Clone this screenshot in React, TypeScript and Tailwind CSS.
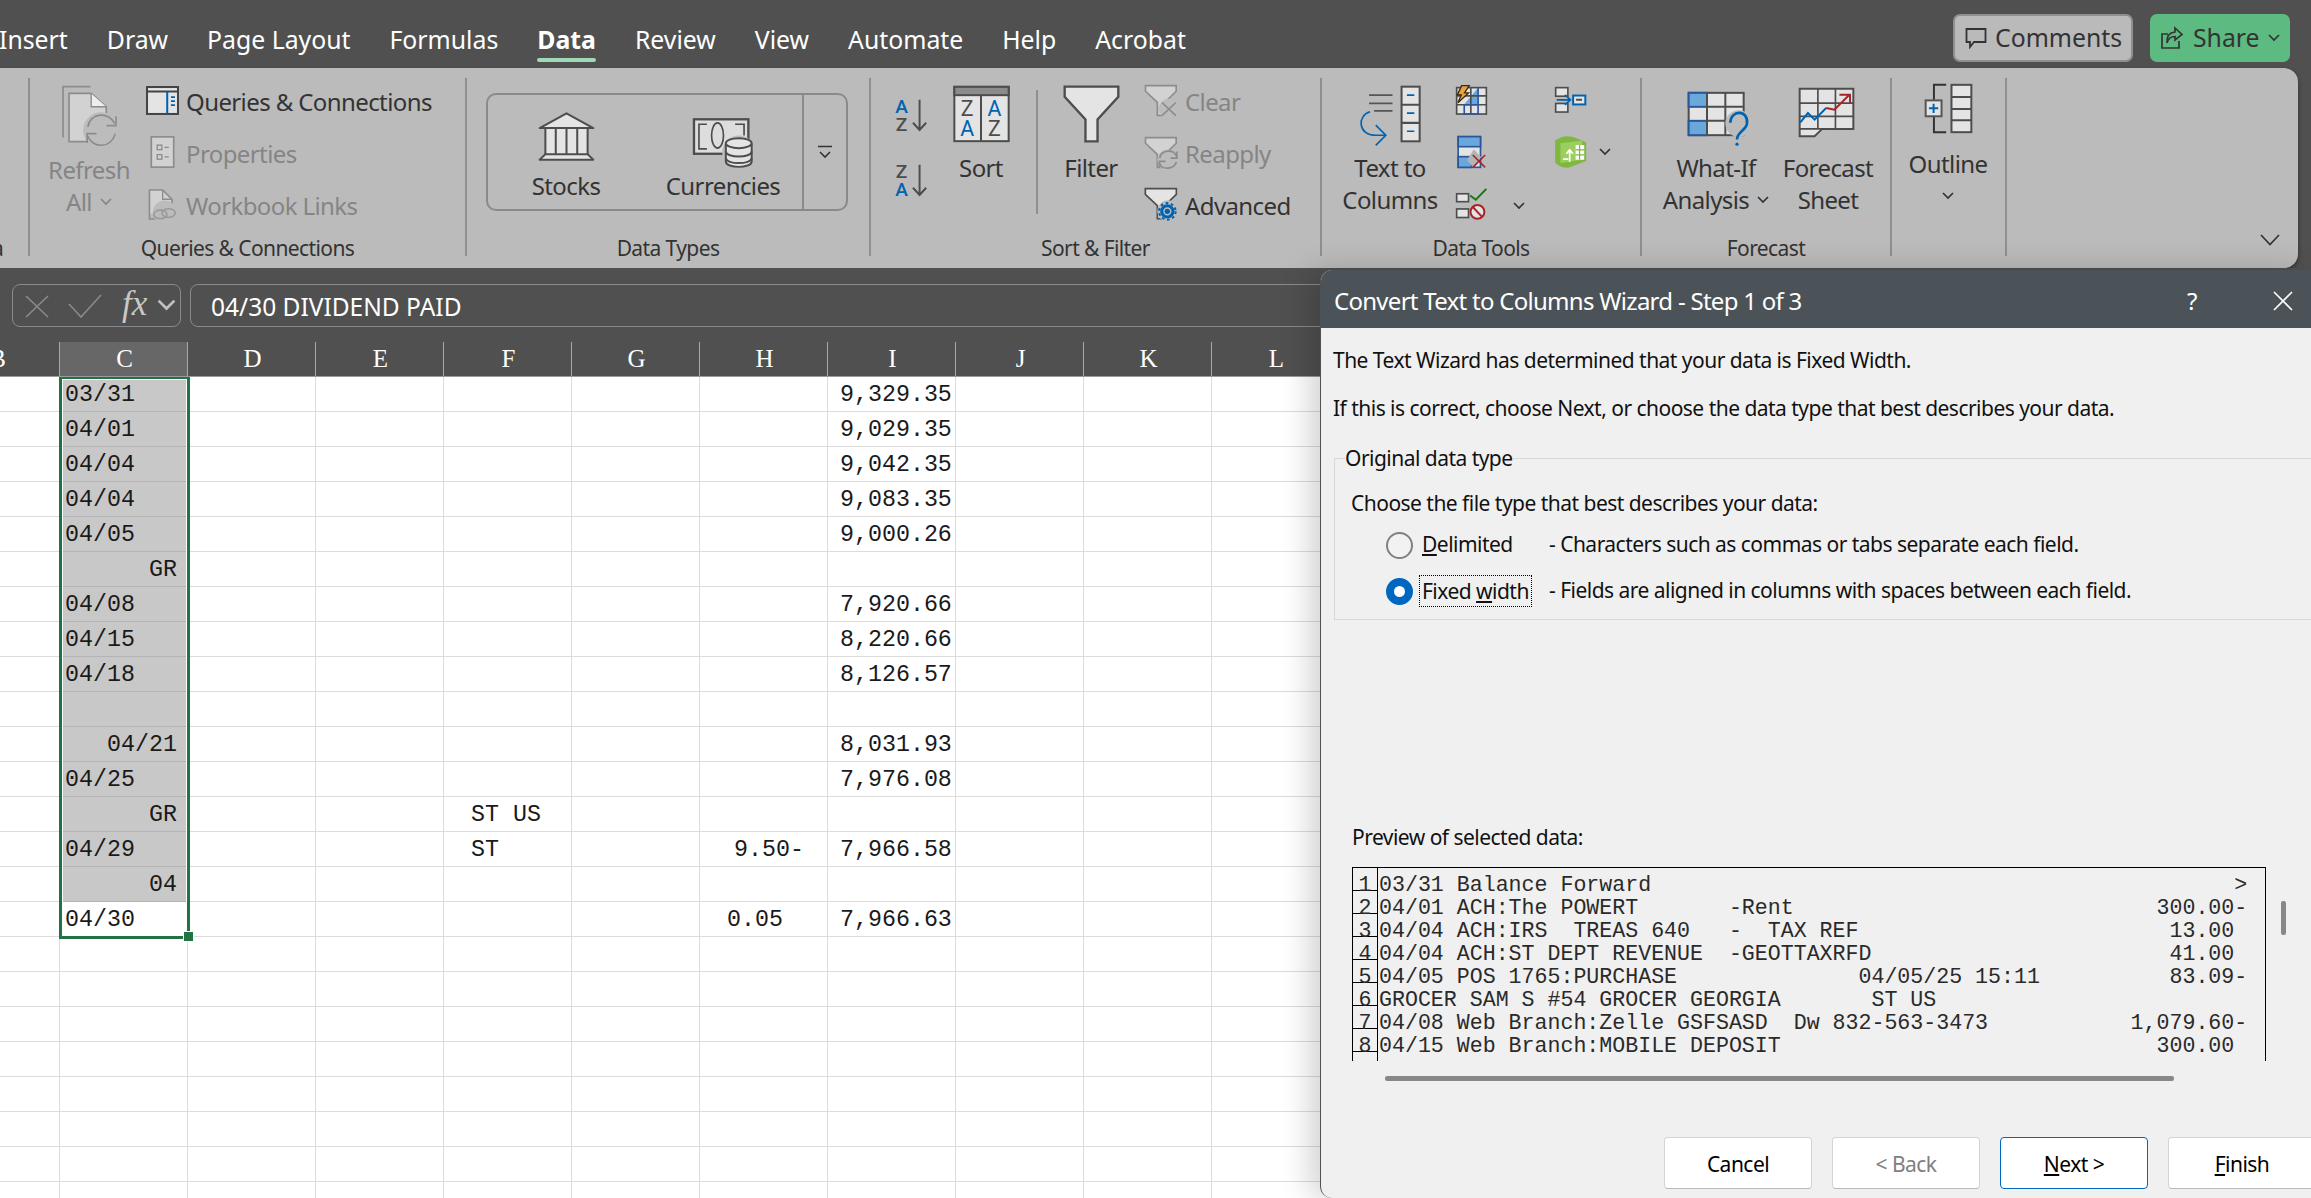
import React from "react";

const D = "#4d4d4d";
const G = "#8c8c8c";
const F = "#e4e4e4";
const FD = "#d2d2d2";
const B = "#0063b1";
const LB = "#6aa8dc";
const NB = "#2b579a";
const R = "#a4262c";
const H = "#bcbcbc";

function Ic({ vb, w, h, children, className }: { vb: string; w: number; h: number; children?: React.ReactNode; className?: string }) {
  return (
    <svg viewBox={vb} width={w} height={h} fill="none" className={"block shrink-0 overflow-visible " + (className ?? "")}>
      {children}
    </svg>
  );
}

function Chev({ c = "#333", w = 12 }: { c?: string; w?: number }) {
  return (
    <svg viewBox="0 0 12 8" width={w} height={(w * 8) / 12} fill="none" className="block shrink-0">
      <path d="M1 1l5 5 5-5" stroke={c} strokeWidth="1.7" />
    </svg>
  );
}

const Refresh = () => (
  <Ic vb="20 15 170 185" w={57} h={62}>
    <path d="M108 20H26V172" stroke={G} strokeWidth="5" />
    <path d="M44 40H110L155 80V184H44Z" fill={FD} stroke={G} strokeWidth="5" />
    <path d="M110 40V80H155" fill="#eeeeee" stroke={G} strokeWidth="4" />
    <circle cx="140" cy="150" r="54" fill={H} />
    <path d="M100 140C108 95 165 95 180 130M182 160C170 205 115 205 100 168" stroke={G} strokeWidth="5" />
    <path d="M184 108V136H156M98 188V160H126" stroke={G} strokeWidth="5" />
  </Ic>
);
const Queries = () => (
  <Ic vb="257 17 98 86" w={33} h={29}>
    <rect x="260" y="20" width="92" height="80" fill={F} stroke="#444" strokeWidth="6" />
    <path d="M260 33H352" stroke="#444" strokeWidth="6" />
    <path d="M320 35V98" stroke={B} strokeWidth="6" />
    <path d="M331 50H343M331 62H343M331 74H343" stroke={B} strokeWidth="5" />
  </Ic>
);
const Properties = () => (
  <Ic vb="268 165 76 102" w={25} h={34}>
    <rect x="272" y="170" width="68" height="92" fill={FD} stroke={G} strokeWidth="5" />
    <rect x="290" y="195" width="14" height="14" stroke={G} strokeWidth="4" />
    <rect x="290" y="224" width="14" height="14" stroke={G} strokeWidth="4" />
    <path d="M312 202H325M312 231H325" stroke={G} strokeWidth="4" />
  </Ic>
);
const WorkbookLinks = () => (
  <Ic vb="268 322 90 100" w={30} h={33}>
    <path d="M272 328H312L340 356V400H272Z" fill={FD} />
    <path d="M292 416H272V328H312L340 356V380" stroke={G} strokeWidth="5" />
    <path d="M312 328V356H340" stroke={G} strokeWidth="4" />
    <circle cx="318" cy="396" r="36" fill={H} />
    <ellipse cx="305" cy="402" rx="20" ry="13" stroke="#9a9a9a" strokeWidth="5" />
    <ellipse cx="330" cy="398" rx="20" ry="13" stroke="#9a9a9a" strokeWidth="5" />
  </Ic>
);
const Stocks = () => (
  <Ic vb="20 20 170 146" w={57} h={49}>
    <rect x="42" y="70" width="126" height="78" fill={F} />
    <path d="M105 24L185 68H25Z" fill={F} stroke={D} strokeWidth="6" strokeLinejoin="round" />
    <path d="M42 70V146M73 70V146M105 70V146M137 70V146M168 70V146" stroke={D} strokeWidth="6" />
    <path d="M42 146H168L185 162H25Z" fill={F} stroke={D} strokeWidth="6" strokeLinejoin="round" />
  </Ic>
);
const Currencies = () => (
  <Ic vb="485 35 190 155" w={63} h={52}>
    <rect x="491" y="41" width="164" height="104" fill="#dddddd" stroke={D} strokeWidth="7" />
    <path d="M530 56H506V130H530M615 56H642V90" stroke={D} strokeWidth="5" />
    <ellipse cx="562" cy="90" rx="18" ry="38" stroke={D} strokeWidth="5" />
    <circle cx="626" cy="140" r="50" fill={H} />
    <path d="M587 115V168C587 190 665 190 665 168V115" fill={F} stroke={D} strokeWidth="6" />
    <ellipse cx="626" cy="113" rx="39" ry="15" fill={F} stroke={D} strokeWidth="6" />
    <path d="M587 138C587 158 665 158 665 138M587 158C587 178 665 178 665 158" stroke={D} strokeWidth="6" />
  </Ic>
);
const AZ = ({ flip }: { flip?: boolean }) => (
  <Ic vb="25 55 105 100" w={35} h={33}>
    <text x="50" y="101" textAnchor="middle" fontSize="58" fontWeight="500" fill={flip ? D : B} className="font-['Roboto']">{flip ? "Z" : "A"}</text>
    <text x="50" y="155" textAnchor="middle" fontSize="58" fontWeight="500" fill={flip ? B : D} className="font-['Roboto']">{flip ? "A" : "Z"}</text>
    <path d="M105 60V150M85 130L105 152L125 130" stroke={D} strokeWidth="6" />
  </Ic>
);
const SortI = () => (
  <Ic vb="200 15 177 173" w={59} h={58}>
    <rect x="207" y="20" width="163" height="163" fill={F} stroke={D} strokeWidth="6" />
    <rect x="207" y="20" width="163" height="25" fill={G} stroke={D} strokeWidth="6" />
    <path d="M287 45V183" stroke={D} strokeWidth="6" />
    <text x="245" y="107" textAnchor="middle" fontSize="64" fill={D} className="font-['Roboto']">Z</text>
    <text x="245" y="168" textAnchor="middle" fontSize="64" fill={B} className="font-['Roboto']">A</text>
    <text x="327" y="107" textAnchor="middle" fontSize="64" fill={B} className="font-['Roboto']">A</text>
    <text x="327" y="168" textAnchor="middle" fontSize="64" fill={D} className="font-['Roboto']">Z</text>
  </Ic>
);
const FilterI = () => (
  <Ic vb="530 15 170 173" w={57} h={58}>
    <path d="M535 20H695V50L633 118V183H597V118L535 50Z" fill={F} stroke={D} strokeWidth="7" />
  </Ic>
);
const Funnel = ({ c, f, y = 0 }: { c: string; f: string; y?: number }) => (
  <path transform={`translate(0 ${y})`} d="M782 15H875V32L840 66V105H818V66L782 32Z" fill={f} stroke={c} strokeWidth="5" />
);
const ClearI = () => (
  <Ic vb="778 10 102 100" w={34} h={33}>
    <Funnel c={G} f={FD} />
    <circle cx="852" cy="85" r="30" fill={H} />
    <path d="M832 66L874 106M874 66L832 106" stroke={G} strokeWidth="5" />
  </Ic>
);
const ReapplyI = () => (
  <Ic vb="778 165 102 100" w={34} h={33}>
    <Funnel c={G} f={FD} y={155} />
    <circle cx="850" cy="238" r="32" fill={H} />
    <path d="M825 232C830 205 868 205 876 226M876 244C868 268 830 268 825 248" stroke={G} strokeWidth="5" />
    <path d="M877 212V232H858M824 262V242H843" stroke={G} strokeWidth="5" />
  </Ic>
);
const AdvancedI = () => (
  <Ic vb="778 320 102 102" w={34} h={34}>
    <Funnel c={D} f={F} y={310} />
    <circle cx="850" cy="392" r="32" fill={H} />
    <circle cx="848" cy="393" r="17" stroke={B} strokeWidth="9" />
    <circle cx="848" cy="393" r="25" stroke={B} strokeWidth="6" strokeDasharray="8 8" />
    <circle cx="848" cy="393" r="8" fill={B} />
  </Ic>
);
const TextToCols = () => (
  <Ic vb="35 15 185 185" w={62} h={62}>
    <path d="M65 45H135M65 70H135M80 92H135" stroke="#555" strokeWidth="5" />
    <rect x="162" y="20" width="54" height="163" fill={F} stroke={D} strokeWidth="6" />
    <path d="M162 74H216M162 128H216" stroke={D} strokeWidth="6" />
    <path d="M178 45H200M178 99H200M178 153H200" stroke={B} strokeWidth="5" />
    <path d="M68 95C30 105 30 165 85 165H112M85 135L115 165L85 195" stroke={B} strokeWidth="5" />
  </Ic>
);
const FlashFill = () => (
  <Ic vb="325 10 100 95" w={33} h={32}>
    <rect x="330" y="20" width="90" height="80" fill={F} stroke={D} strokeWidth="5" />
    <path d="M353 70L395 20V70Z" fill={LB} />
    <path d="M330 45H420M330 72H420M373 20V100" stroke={D} strokeWidth="5" />
    <path d="M353 72H395V20M353 72V100H395V72" stroke={NB} strokeWidth="5" />
    <path d="M345 14H368L354 36H366L334 66L344 42H332Z" fill="#e8a33d" stroke="#3a2a10" strokeWidth="4" />
  </Ic>
);
const RemoveDup = () => (
  <Ic vb="335 165 92 102" w={31} h={34}>
    <rect x="341" y="170" width="67" height="92" fill={F} stroke={NB} strokeWidth="5" />
    <rect x="341" y="170" width="67" height="30" fill={LB} stroke={NB} strokeWidth="5" />
    <rect x="341" y="230" width="40" height="32" fill={LB} stroke={NB} strokeWidth="5" />
    <path d="M388 208L410 232L385 262L368 240Z" fill="#b4b4b4" />
    <path d="M385 225L422 262M422 225L385 262" stroke={R} strokeWidth="5" />
  </Ic>
);
const Validation = () => (
  <Ic vb="325 320 100 102" w={33} h={34}>
    <rect x="330" y="340" width="36" height="24" fill={F} stroke={D} strokeWidth="5" />
    <rect x="330" y="386" width="36" height="26" fill={F} stroke={D} strokeWidth="5" />
    <path d="M371 345L388 358L420 325" stroke="#107c10" strokeWidth="6" />
    <circle cx="393" cy="395" r="21" fill={F} stroke={R} strokeWidth="6" />
    <path d="M379 380L407 410" stroke={R} strokeWidth="6" />
  </Ic>
);
const Consolidate = () => (
  <Ic vb="625 15 100 85" w={33} h={28}>
    <rect x="630" y="20" width="37" height="26" fill={F} stroke={D} strokeWidth="5" />
    <rect x="630" y="68" width="37" height="26" fill={F} stroke={D} strokeWidth="5" />
    <path d="M633 57H674M658 42L675 57L658 72" stroke={B} strokeWidth="5" />
    <rect x="683" y="44" width="37" height="27" fill={F} stroke={B} strokeWidth="6" />
    <path d="M692 57H710" stroke={D} strokeWidth="6" />
  </Ic>
);
const GreenCube = () => (
  <Ic vb="622 165 105 103" w={35} h={34}>
    <path d="M628 182Q660 158 700 178L722 188V244L668 264Q640 264 628 248Z" fill="#7fb83f" />
    <path d="M644 190L710 182V240L644 250Z" fill="#9ccd5f" />
    <path d="M690 195H716V240H690Z" fill="#ffffff" />
    <path d="M690 210H716M690 225H716M702 195V240" stroke="#7fb83f" strokeWidth="4" />
    <path d="M672 212V246M662 222L672 210L682 222M652 238H668" stroke="#ffffff" strokeWidth="5" />
  </Ic>
);
const WhatIf = () => (
  <Ic vb="20 30 195 170" w={65} h={57}>
    <rect x="25" y="38" width="165" height="127" fill={F} stroke={D} strokeWidth="6" />
    <rect x="25" y="38" width="55" height="42" fill={LB} stroke={NB} strokeWidth="6" />
    <rect x="25" y="122" width="55" height="43" fill={LB} stroke={NB} strokeWidth="6" />
    <path d="M80 80H190M80 122H190M135 38V165M80 38V165" stroke={D} strokeWidth="6" />
    <circle cx="175" cy="130" r="40" fill={H} />
    <path d="M150 128C150 88 205 88 200 130C198 150 170 155 170 178" stroke={B} strokeWidth="8" />
    <circle cx="170" cy="192" r="5" fill={B} />
  </Ic>
);
const ForecastI = () => (
  <Ic vb="355 22 172 153" w={57} h={51}>
    <path d="M360 27H522V148H428L405 170H360Z" fill={F} stroke={D} strokeWidth="6" />
    <path d="M360 148H428" stroke={D} strokeWidth="5" />
    <path d="M415 27V148M468 27V148M360 70H522M360 110H522" stroke={D} strokeWidth="5" />
    <path d="M362 128L385 100L405 120L440 85" stroke={B} strokeWidth="6" />
    <path d="M440 85L465 90L510 45M480 45H512V72" stroke={R} strokeWidth="6" />
  </Ic>
);
const OutlineI = () => (
  <Ic vb="730 10 148 153" w={49} h={51}>
    <path d="M797 15H760V60M760 112V158H797" stroke="#333" strokeWidth="6" />
    <rect x="735" y="62" width="48" height="48" fill={F} stroke="#555" strokeWidth="6" />
    <path d="M745 86H773M759 72V100" stroke={B} strokeWidth="6" />
    <rect x="813" y="15" width="60" height="143" fill={F} stroke={D} strokeWidth="6" />
    <path d="M813 52H873M813 88H873M813 122H873" stroke={D} strokeWidth="6" />
  </Ic>
);

function Big({ w, icon, lines, area = "pt-[8px] h-[74px]", className = "", dim }: { w: string; icon: React.ReactNode; lines: React.ReactNode[]; area?: string; className?: string; dim?: boolean }) {
  return (
    <div className={"flex flex-col items-center shrink-0 " + w + " " + className}>
      <div className={"flex justify-center " + area}>{icon}</div>
      {lines.map((l, i) => (
        <div key={i} className={"h-[32px] leading-[32px] flex items-center gap-[8px] whitespace-nowrap " + (dim ? "text-[#858585]" : "text-[#333333]")}>
          {l}
        </div>
      ))}
    </div>
  );
}

function Mini({ icon, label, dim, box = "w-[33px]" }: { icon: React.ReactNode; label?: string; dim?: boolean; box?: string }) {
  return (
    <div className="flex items-center h-[52px]">
      <div className={"flex justify-center shrink-0 -mt-[4px] " + box}>{icon}</div>
      {label && <span className={"ml-[7px] whitespace-nowrap " + (dim ? "text-[#858585]" : "text-[#333333]")}>{label}</span>}
    </div>
  );
}

function Group({ w, label, children, labelCls = "text-center" }: { w: string; label?: string; children?: React.ReactNode; labelCls?: string }) {
  return (
    <div className={"flex flex-col h-[178px] shrink-0 border-r-2 border-[#8f8f8f] " + w}>
      <div className="flex flex-1 min-h-0">{children}</div>
      <div className={"h-[24px] -mb-[4px] leading-[24px] text-[#333333] whitespace-nowrap text-[21px] " + labelCls}>{label}</div>
    </div>
  );
}

const tabs = ["Insert", "Draw", "Page Layout", "Formulas", "Data", "Review", "View", "Automate", "Help", "Acrobat"];

function TopBar() {
  return (
    <div className="flex items-end h-[68px] pb-[6px] bg-[#505050] shrink-0 text-white tracking-normal">
      <div className="flex items-center gap-[39px] -ml-[1px] text-[24.8px]">
        {tabs.map((t) => (
          <div key={t} className={"relative h-[44px] leading-[42px] whitespace-nowrap " + (t === "Data" ? "font-bold" : "")}>
            {t}
            {t === "Data" && <div className="absolute left-0 right-0 bottom-0 h-[4px] rounded-[2px] bg-[#a0d8b8]" />}
          </div>
        ))}
      </div>
      <div className="ml-auto flex items-center gap-[17px] pr-[21px]">
        <div className="flex items-center w-[180px] h-[48px] pl-[10px] bg-[#bababa] border-2 border-[#8f8f8f] rounded-[7px] text-[#333333] text-[24.8px]">
          <svg viewBox="0 0 22 22" width="22" height="22" fill="none" className="shrink-0">
            <path d="M1.5 2H20.5V15H9L5 20V15H1.5Z" stroke="#333" strokeWidth="1.8" />
          </svg>
          <span className="ml-[8px]">Comments</span>
        </div>
        <div className="flex items-center w-[140px] h-[48px] pl-[10px] bg-[#5dbb82] rounded-[7px] text-[#333333] text-[24.8px]">
          <svg viewBox="0 0 24 24" width="24" height="24" fill="none" className="shrink-0">
            <path d="M8 8H2V22H19V15" stroke="#333" strokeWidth="1.7" />
            <path d="M15 2L22 8.5L15 14V10.5C10 10.5 8 13 7 17C6.5 10 9 6.5 15 6Z" stroke="#333" strokeWidth="1.7" />
          </svg>
          <span className="ml-[9px]">Share</span>
          <span className="ml-[8px]"><Chev /></span>
        </div>
      </div>
    </div>
  );
}

function Ribbon() {
  return (
    <div className="flex w-[2298px] h-[200px] shrink-0 pt-[10px] bg-[#bbbbbb] rounded-r-[14px] text-[24px] tracking-[-0.025em] shadow-[0_2px_4px_rgba(0,0,0,0.4)] overflow-hidden">
      <Group w="w-[30px]" label="a" labelCls="-ml-[8px]" />
      <Group w="w-[437px]" label="Queries & Connections">
        <Big w="w-[100px]" className="ml-[9px]" dim area="pt-[7px] h-[76px]" icon={<Refresh />} lines={["Refresh", <>All <Chev c="#858585" /></>]} />
        <div className="flex flex-col ml-[7px] -mt-[2px]">
          <Mini icon={<Queries />} label="Queries & Connections" />
          <Mini icon={<Properties />} label="Properties" dim />
          <Mini icon={<WorkbookLinks />} label="Workbook Links" dim />
        </div>
      </Group>
      <Group w="w-[404px]" label="Data Types">
        <div className="flex ml-[19px] mt-[15px] w-[362px] h-[118px] border-2 border-[#8a8a8a] rounded-[10px]">
          <div className="flex flex-col items-center w-[156px] pt-[17px]">
            <div className="h-[58px]"><Stocks /></div>
            <div className="h-[32px] leading-[32px] text-[#333333]">Stocks</div>
          </div>
          <div className="flex flex-col items-center w-[158px] pt-[22px]">
            <div className="h-[53px]"><Currencies /></div>
            <div className="h-[32px] leading-[32px] text-[#333333]">Currencies</div>
          </div>
          <div className="flex-1 flex items-center justify-center border-l-2 border-[#8a8a8a]">
            <svg viewBox="0 0 16 14" width="16" height="14" fill="none">
              <path d="M1 1.5H15" stroke="#333" strokeWidth="1.6" />
              <path d="M3 7L8 12L13 7" stroke="#333" strokeWidth="1.6" />
            </svg>
          </div>
        </div>
      </Group>
      <Group w="w-[451px]" label="Sort & Filter">
        <div className="flex flex-col ml-[22px] pt-[20px] gap-[32px] shrink-0">
          <AZ />
          <AZ flip />
        </div>
        <Big w="w-[70px]" className="ml-[18px]" area="pt-[7px] h-[74px]" icon={<SortI />} lines={["Sort"]} />
        <div className="w-[2px] h-[124px] mt-[12px] ml-[20px] bg-[#8f8f8f] shrink-0" />
        <Big w="w-[70px]" className="ml-[18px]" area="pt-[7px] h-[74px]" icon={<FilterI />} lines={["Filter"]} />
        <div className="flex flex-col ml-[18px] -mt-[2px]">
          <Mini icon={<ClearI />} label="Clear" dim box="w-[34px]" />
          <Mini icon={<ReapplyI />} label="Reapply" dim box="w-[34px]" />
          <Mini icon={<AdvancedI />} label="Advanced" box="w-[34px]" />
        </div>
      </Group>
      <Group w="w-[320px]" label="Data Tools">
        <Big w="w-[100px]" className="ml-[18px]" area="pt-[7px] h-[74px]" icon={<TextToCols />} lines={["Text to", "Columns"]} />
        <div className="flex flex-col w-[100px] ml-[13px] -mt-[2px] shrink-0">
          <Mini icon={<FlashFill />} box="w-[37px]" />
          <Mini icon={<RemoveDup />} box="w-[37px]" />
          <div className="flex items-center h-[52px]">
            <div className="flex justify-center w-[37px] -mt-[4px]"><Validation /></div>
            <div className="ml-[23px]"><Chev /></div>
          </div>
        </div>
        <div className="flex flex-col -mt-[2px]">
          <Mini icon={<Consolidate />} box="w-[35px]" />
          <div className="flex items-center h-[52px]">
            <div className="flex justify-center w-[35px] -mt-[4px]"><GreenCube /></div>
            <div className="ml-[11px] -mt-[4px]"><Chev /></div>
          </div>
        </div>
      </Group>
      <Group w="w-[250px]" label="Forecast">
        <Big w="w-[120px]" className="ml-[14px]" area="pt-[12px] pl-[6px] h-[74px]" icon={<WhatIf />} lines={["What-If", <>Analysis <Chev /></>]} />
        <Big w="w-[100px]" className="ml-[2px]" area="pt-[9px] pr-[3px] h-[74px]" icon={<ForecastI />} lines={["Forecast", "Sheet"]} />
      </Group>
      <Group w="w-[115px]">
        <Big w="w-[90px]" className="ml-[11px]" area="pt-[5px] h-[70px]" icon={<OutlineI />} lines={["Outline", <Chev />]} />
      </Group>
      <div className="ml-auto self-end mb-[22px] mr-[18px]">
        <svg viewBox="0 0 20 12" width="20" height="12" fill="none" className="block">
          <path d="M1 1L10 10.5L19 1" stroke="#333" strokeWidth="1.7" />
        </svg>
      </div>
    </div>
  );
}

function FormulaBar() {
  return (
    <div className="flex h-[74px] shrink-0 pt-[16px] pb-[15px] pl-[12px] gap-[9px] bg-[#505050]">
      <div className="flex items-center w-[169px] h-full border border-[#8a8a8a] rounded-[8px] shrink-0">
        <svg viewBox="0 0 100 24" width="100" height="24" fill="none" className="ml-[12px] shrink-0">
          <path d="M1 2L23 23M23 2L1 23" stroke="#8a8a8a" strokeWidth="1.6" />
          <path d="M76 1L56 23L44 10" stroke="#8a8a8a" strokeWidth="1.6" />
        </svg>
        <span className="-ml-[3px] font-['Liberation_Serif',serif] italic text-[35px] text-[#c8c8c8] leading-none -mt-[4px]">fx</span>
        <span className="ml-[10px]"><Chev c="#c0c0c0" w={19} /></span>
      </div>
      <div className="flex-1 flex items-center h-full pl-[20px] pt-[3px] border border-[#8a8a8a] rounded-[8px] text-white text-[24.5px] tracking-normal">
        04/30 DIVIDEND PAID
      </div>
    </div>
  );
}

const cols = ["C", "D", "E", "F", "G", "H", "I", "J", "K", "L"];

function HeaderRow() {
  return (
    <div className="flex h-[35px] shrink-0 bg-[#505050] border-b border-[#9a9a9a] font-['Liberation_Serif',serif] text-[25px] text-white tracking-normal overflow-hidden">
      <div className="w-[60px] shrink-0 flex justify-end border-r border-[#a8a8a8] overflow-hidden">
        <span className="mr-[53px] leading-[34px]">B</span>
      </div>
      {cols.map((c) => (
        <div key={c} className={"w-[128px] shrink-0 pl-[2px] text-center leading-[34px] border-r border-[#a8a8a8] " + (c === "C" ? "bg-[#676767]" : "")}>
          {c}
        </div>
      ))}
    </div>
  );
}

type Row = { c?: string; cr?: boolean; f?: string; h?: string; hp?: string; i?: string };
const rows: Row[] = [
  { c: "03/31", i: "9,329.35" },
  { c: "04/01", i: "9,029.35" },
  { c: "04/04", i: "9,042.35" },
  { c: "04/04", i: "9,083.35" },
  { c: "04/05", i: "9,000.26" },
  { c: "GR", cr: true },
  { c: "04/08", i: "7,920.66" },
  { c: "04/15", i: "8,220.66" },
  { c: "04/18", i: "8,126.57" },
  {},
  { c: "04/21", cr: true, i: "8,031.93" },
  { c: "04/25", i: "7,976.08" },
  { c: "GR", cr: true, f: "ST US" },
  { c: "04/29", f: "ST", h: "9.50-", hp: "pl-[34px]", i: "7,966.58" },
  { c: "04", cr: true },
  { c: "04/30", h: "0.05", hp: "pl-[27px]", i: "7,966.63" },
  {}, {}, {}, {}, {}, {}, {}, {},
];

const cell = "w-[128px] shrink-0 flex items-center pt-[2px] border-r border-b border-[#dcdcdc] ";

function Grid() {
  return (
    <div className="relative flex-1 min-h-0 overflow-hidden bg-white font-['Liberation_Mono',monospace] text-[23.3px] text-[#1a1a1a] tracking-normal">
      {rows.map((r, idx) => (
        <div key={idx} className="flex h-[35px]">
          <div className="w-[60px] shrink-0 border-r border-b border-[#dcdcdc]" />
          <div className={"w-[128px] shrink-0 flex items-center pt-[2px] border-r border-b " + (idx < 15 ? "bg-[#c8c8c8] border-r-[#c8c8c8] border-b-[#b4b4b4] " : "border-[#dcdcdc] ") + (r.cr ? "justify-end pr-[10px]" : "pl-[5px]")}>
            {r.c}
          </div>
          <div className={cell} />
          <div className={cell} />
          <div className={cell + "pl-[27px] whitespace-pre"}>{r.f}</div>
          <div className={cell} />
          <div className={cell + (r.hp ?? "")}>{r.h}</div>
          <div className={cell + "pl-[12px]"}>{r.i}</div>
          <div className={cell} />
          <div className={cell} />
          <div className={cell} />
        </div>
      ))}
      <div className="absolute left-[59px] -top-[1px] w-[131px] h-[563px] border-[3px] border-[#217346] pointer-events-none">
        <div className="w-full h-full border border-white" />
      </div>
      <div className="absolute left-[184px] top-[555px] w-[9px] h-[9px] bg-[#217346] outline outline-1 outline-white" />
    </div>
  );
}

const at = (left: string, col: number, right: string) => left.padEnd(col) + right;

const preview: [string, string][] = [
  ["1", at("03/31 Balance Forward", 66, ">")],
  ["2", at("04/01 ACH:The POWERT       -Rent", 60, "300.00-")],
  ["3", at("04/04 ACH:IRS  TREAS 640   -  TAX REF", 61, "13.00")],
  ["4", at("04/04 ACH:ST DEPT REVENUE  -GEOTTAXRFD", 61, "41.00")],
  ["5", at("04/05 POS 1765:PURCHASE              04/05/25 15:11", 61, "83.09-")],
  ["6", "GROCER SAM S #54 GROCER GEORGIA       ST US"],
  ["7", at("04/08 Web Branch:Zelle GSFSASD  Dw 832-563-3473", 58, "1,079.60-")],
  ["8", at("04/15 Web Branch:MOBILE DEPOSIT", 60, "300.00")],
];

function Radio({ on }: { on?: boolean }) {
  return on ? (
    <div className="w-[27px] h-[27px] rounded-full bg-white border-[8px] border-[#0067c0] shrink-0" />
  ) : (
    <div className="w-[27px] h-[27px] rounded-full bg-[#f2f2f2] border-2 border-[#808080] shrink-0" />
  );
}

function Btn({ children, cls = "", tx = "text-black" }: { children: React.ReactNode; cls?: string; tx?: string }) {
  return (
    <div className={"w-[148px] h-[52px] shrink-0 flex items-center justify-center pt-[3px] bg-white rounded-[4px] border " + (cls || "border-[#d4d4d4] border-b-[#b8b8b8] ") + " " + tx}>
      {children}
    </div>
  );
}

function Dialog() {
  return (
    <div className="absolute left-[1320px] right-0 top-[270px] bottom-0 flex flex-col bg-[#f0f0f0] border-l border-[#4b5359] rounded-l-[12px] overflow-hidden shadow-[-10px_0_30px_rgba(0,0,0,0.18)] text-[21px] tracking-[-0.025em] text-[#111111]">
      <div className="flex items-center h-[58px] shrink-0 bg-[#4b5359] text-white pl-[13px] pt-[3px]">
        <span className="text-[24px] tracking-[-0.03em]">Convert Text to Columns Wizard - Step 1 of 3</span>
        <span className="ml-auto text-[24px]">?</span>
        <svg viewBox="0 0 20 20" width="20" height="20" fill="none" className="ml-[76px] mr-[18px]">
          <path d="M1 1L19 19M19 1L1 19" stroke="#ffffff" strokeWidth="1.6" />
        </svg>
      </div>
      <div className="pl-[12px] mt-[16px] h-[32px] leading-[32px] whitespace-nowrap">The Text Wizard has determined that your data is Fixed Width.</div>
      <div className="pl-[12px] mt-[16px] h-[32px] leading-[32px] whitespace-nowrap">If this is correct, choose Next, or choose the data type that best describes your data.</div>
      <fieldset className="ml-[13px] mt-[18px] border-l border-t border-b border-[#d8d8d8] pb-[5px]">
        <legend className="ml-[10px] h-[32px] leading-[32px] whitespace-nowrap">Original data type</legend>
        <div className="ml-[16px] mt-[13px] h-[32px] leading-[32px]">Choose the file type that best describes your data:</div>
        <div className="flex items-center h-[46px] ml-[51px] mt-[3px]">
          <Radio />
          <div className="w-[136px] pl-[9px] shrink-0"><u>D</u>elimited</div>
          <div>- Characters such as commas or tabs separate each field.</div>
        </div>
        <div className="flex items-center h-[46px] ml-[51px]">
          <Radio on />
          <div className="w-[136px] pl-[6px] shrink-0">
            <span className="inline-block px-[2px] h-[32px] leading-[30px] border border-dotted border-black">Fixed <u>w</u>idth</span>
          </div>
          <div>- Fields are aligned in columns with spaces between each field.</div>
        </div>
      </fieldset>
      <div className="ml-[31px] mt-[201px] h-[32px] leading-[32px]">Preview of selected data:</div>
      <div className="flex items-start ml-[31px] mt-[14px] shrink-0">
        <div className="w-[914px] h-[194px] border border-b-0 border-black overflow-hidden font-['Liberation_Mono',monospace] text-[21.6px] text-[#2a2a2a] tracking-normal">
          {preview.map(([n, t]) => (
            <div key={n} className="flex h-[23px] leading-[35px]">
              <div className="w-[25px] shrink-0 text-center border-r border-b border-black">{n}</div>
              <div className="pl-[1px] whitespace-pre">{t}</div>
            </div>
          ))}
          <div className="w-[25px] h-[23px] border-r border-black" />
        </div>
        <div className="w-[5px] h-[34px] mt-[34px] ml-[15px] rounded-[2px] bg-[#888888]" />
      </div>
      <div className="ml-[64px] mt-[15px] w-[789px] h-[5px] rounded-[2px] bg-[#888888] shrink-0" />
      <div className="flex gap-[20px] ml-[343px] mt-[56px]">
        <Btn>Cancel</Btn>
        <Btn tx="text-[#808080]">&lt; Back</Btn>
        <Btn cls="border-[#0067c0]"><span><u>N</u>ext &gt;</span></Btn>
        <Btn><span><u>F</u>inish</span></Btn>
      </div>
    </div>
  );
}

export default function App() {
  return (
    <div className="relative flex flex-col w-[2311px] h-[1198px] overflow-hidden bg-[#505050] font-['Noto_Sans',sans-serif]">
      <TopBar />
      <Ribbon />
      <FormulaBar />
      <HeaderRow />
      <Grid />
      <Dialog />
    </div>
  );
}
